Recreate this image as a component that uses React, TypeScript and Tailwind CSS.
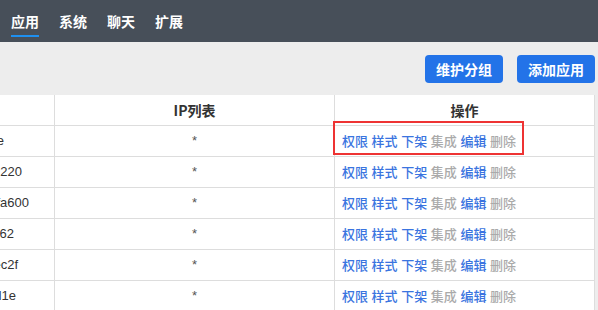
import React from "react";

type Row = {
  id: string;
  pad: string;
};

const tabs = ["应用", "系统", "聊天", "扩展"];

const rows: Row[] = [
  { id: "5f2a9c81e", pad: "pr-[50px]" },
  { id: "61b7e2220", pad: "pr-[32px]" },
  { id: "6072fa600", pad: "pr-[25px]" },
  { id: "63d1b8e62", pad: "pr-[40px]" },
  { id: "5e94bec2f", pad: "pr-[36px]" },
  { id: "62a70cd1e", pad: "pr-[38px]" },
];

const actions = [
  { label: "权限", active: true },
  { label: "样式", active: true },
  { label: "下架", active: true },
  { label: "集成", active: false },
  { label: "编辑", active: true },
  { label: "删除", active: false },
];

const cjk = { fontFamily: '"Noto Sans CJK SC", "Noto Sans", sans-serif' };
const latin = { fontFamily: '"Liberation Sans", Arial, sans-serif' };

export default function App() {
  return (
    <div
      className="h-[310px] w-[598px] overflow-hidden bg-[#ededed]"
      style={cjk}
    >
      <div className="flex h-[42px] items-start gap-[20px] bg-[#474f59] pl-[11px]">
        {tabs.map((tab, i) => (
          <div key={tab} className="flex h-[42px] flex-col items-center">
            <span className="mt-[11px] text-[14px] font-bold leading-[20px] text-white">
              {tab}
            </span>
            {i === 0 && <span className="mt-[4px] h-[2px] w-[28px] bg-[#1e90f0]" />}
          </div>
        ))}
      </div>

      <div className="flex justify-end gap-[14px] pr-[3px] pt-[13px]">
        <button
          type="button"
          className="h-[28px] w-[78px] rounded-[4px] bg-[#2373e8] text-[14px] font-bold text-white"
        >
          维护分组
        </button>
        <button
          type="button"
          className="h-[28px] w-[78px] rounded-[4px] bg-[#2373e8] text-[14px] font-bold text-white"
        >
          添加应用
        </button>
      </div>

      <div className="relative mt-[12px] w-[595px] bg-white">
        <div className="grid grid-cols-[55px_280px_260px] border-b border-[#dddddd]">
          <div className="h-[30px] border-r border-[#dddddd]" />
          <div className="flex h-[30px] items-center justify-center border-r border-[#dddddd] text-[14px] font-bold text-[#333]">
            IP列表
          </div>
          <div className="flex h-[30px] items-center justify-center border-r border-[#dddddd] text-[14px] font-bold text-[#333]">
            操作
          </div>
        </div>

        {rows.map((row) => (
          <div
            key={row.id}
            className="grid grid-cols-[55px_280px_260px] border-b border-[#dddddd]"
          >
            <div
              className={`flex h-[30px] items-center justify-end overflow-hidden whitespace-nowrap border-r border-[#dddddd] text-[13px] text-[#333] ${row.pad}`}
              style={latin}
            >
              {row.id}
            </div>
            <div
              className="flex h-[30px] items-center justify-center border-r border-[#dddddd] text-[13px] text-[#555]"
              style={latin}
            >
              *
            </div>
            <div className="flex h-[30px] items-center gap-[3.6px] border-r border-[#dddddd] pl-[7px] text-[13px] font-medium">
              {actions.map((a) => (
                <span
                  key={a.label}
                  className={a.active ? "text-[#3a74e0]" : "text-[#aaaaaa]"}
                >
                  {a.label}
                </span>
              ))}
            </div>
          </div>
        ))}

        <div className="pointer-events-none absolute left-[333px] top-[26px] h-[34px] w-[191px] border-2 border-[#ee3333]" />
      </div>
    </div>
  );
}
